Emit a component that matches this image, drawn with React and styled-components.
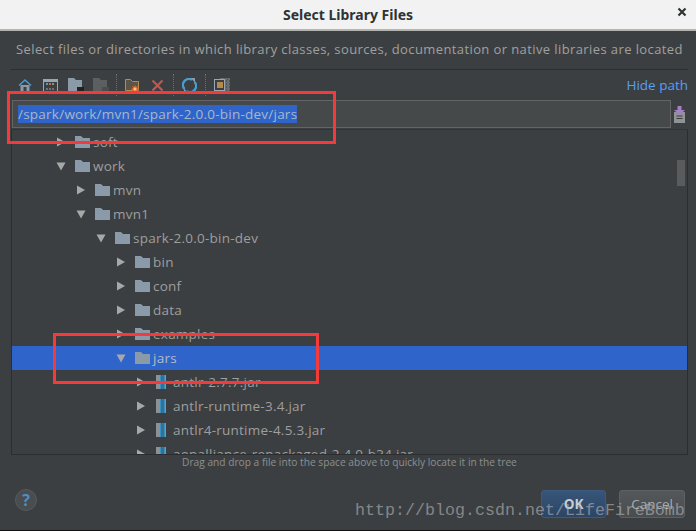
import React from "react";
import styled, { createGlobalStyle } from "styled-components";

const Global = createGlobalStyle`
  html, body { margin: 0; padding: 0; background: #111; }
  body { font-family: "Open Sans", "Noto Sans", sans-serif; }
`;

const Dialog = styled.div`
  position: relative;
  width: 696px;
  height: 530px;
  background: #3c3f41;
  overflow: hidden;
  display: flex;
  flex-direction: column;
`;
const TitleBar = styled.div`
  height: 29px;
  flex: none;
  background: #f2f2f2;
  border-bottom: 2px solid #b4b4b0;
  display: flex;
  align-items: center;
  justify-content: center;
  position: relative;
  font-family: "Noto Sans", sans-serif;
  font-weight: 700;
  font-size: 14px;
  color: #2e3436;
`;
const CloseBtn = styled.svg`
  position: absolute;
  right: 9px;
  top: 7px;
`;
const Description = styled.div`
  height: 36px;
  flex: none;
  margin: 0 8px 0 16px;
  padding-bottom: 2px;
  display: flex;
  align-items: center;
  font-size: 13px;
  letter-spacing: 0.4px;
  white-space: nowrap;
  color: #a0a0a0;
`;
const Separator = styled.div`
  height: 1px;
  flex: none;
  margin: 0 8px 0 11px;
  background: #2b2d2e;
`;
const ToolRow = styled.div`
  height: 30px;
  flex: none;
  margin: 0 8px 0 18px;
  display: flex;
  align-items: center;
`;
const ToolIcon = styled.svg`
  flex: none;
  margin-right: ${p => p.$gap ?? 9}px;
`;
const ToolDivider = styled.div`
  width: 0;
  height: 22px;
  flex: none;
  margin: 0 8px 0 0;
  border-left: 1px dotted #6c6f71;
`;
const HidePath = styled.a`
  margin-left: auto;
  font-size: 13.5px;
  line-height: 18px;
  color: #589df6;
`;
const PathRow = styled.div`
  height: 28px;
  flex: none;
  margin: 0 10px 0 12px;
  display: flex;
  align-items: center;
  gap: 2px;
`;
const PathField = styled.div`
  flex: 1;
  height: 100%;
  box-sizing: border-box;
  background: #45494a;
  border: 1px solid #646464;
  padding-left: 5px;
  display: flex;
  align-items: center;
`;
const PathText = styled.span`
  background: #2f65ca;
  color: #a9b7c6;
  font-size: 13.5px;
  line-height: 18px;
  letter-spacing: 0.24px;
`;
const TreeBox = styled.div`
  position: relative;
  height: 324px;
  flex: none;
  margin: 1px 8px 0 11px;
  border: 1px solid #2b2d2e;
  border-top-color: #323436;
  overflow: hidden;
`;
const Row = styled.div`
  height: 24px;
  display: flex;
  align-items: center;
  padding-left: ${p => 44 + p.$depth * 20}px;
  background: ${p => (p.$selected ? "#2f65ca" : "transparent")};
  color: ${p => (p.$selected ? "#b4bcc6" : "#9e9e9e")};
  font-size: 13.5px;
  letter-spacing: 0.24px;
  white-space: nowrap;
`;
const Arrow = styled.svg`
  flex: none;
  margin-right: 9px;
`;
const NodeIcon = styled.svg`
  flex: none;
  margin-right: 3px;
`;
const Scrollbar = styled.div`
  position: absolute;
  right: 2px;
  top: 30px;
  width: 8px;
  height: 26px;
  background: #595b5d;
`;
const Hint = styled.div`
  height: 14px;
  flex: none;
  padding-left: 182px;
  display: flex;
  align-items: center;
  font-size: 10.2px;
  white-space: nowrap;
  color: #8d8f90;
`;
const Footer = styled.div`
  flex: 1;
  display: flex;
  align-items: flex-start;
  padding: 20px 10px 0 15px;
`;
const HelpBtn = styled.div`
  width: 22px;
  height: 22px;
  border-radius: 50%;
  box-sizing: border-box;
  background: #4a4d50;
  border: 1px solid #555a5e;
  display: flex;
  align-items: center;
  justify-content: center;
  font-weight: 700;
  font-size: 16px;
  line-height: 1;
  color: #4d8fc0;
`;
const DialogBtn = styled.div`
  width: ${p => p.$width}px;
  height: 28px;
  box-sizing: border-box;
  margin: 1px 0 0 ${p => p.$ml ?? 0}px;
  border-radius: 3px;
  border: 1px solid ${p => (p.$primary ? "#3d5a7c" : "#5e6163")};
  background: ${p => (p.$primary ? "linear-gradient(#37557a, #2b4565)" : "linear-gradient(#54585a, #4a4d4f)")};
  color: ${p => (p.$primary ? "#c8ced4" : "#a8abad")};
  font-weight: ${p => (p.$primary ? 700 : 400)};
  font-size: 13.5px;
  display: flex;
  align-items: center;
  justify-content: center;
`;
const RedBox = styled.div`
  position: absolute;
  box-sizing: border-box;
  left: ${p => p.$x}px;
  top: ${p => p.$y}px;
  width: ${p => p.$w}px;
  height: ${p => p.$h}px;
  border: 3px solid #f43a3a;
`;
const Watermark = styled.div`
  position: absolute;
  left: 355px;
  top: 501px;
  font-family: "Liberation Mono", monospace;
  font-size: 16.67px;
  line-height: 20px;
  white-space: nowrap;
  color: rgba(176, 176, 176, 0.65);
`;
const BottomEdge = styled.div`
  height: 1px;
  background: #111;
`;

const rows = [
  { depth: 0, name: "soft", closed: true },
  { depth: 0, name: "work" },
  { depth: 1, name: "mvn", closed: true },
  { depth: 1, name: "mvn1" },
  { depth: 2, name: "spark-2.0.0-bin-dev" },
  { depth: 3, name: "bin", closed: true },
  { depth: 3, name: "conf", closed: true },
  { depth: 3, name: "data", closed: true },
  { depth: 3, name: "examples", closed: true },
  { depth: 3, name: "jars", selected: true },
  { depth: 4, name: "antlr-2.7.7.jar", closed: true, jar: true },
  { depth: 4, name: "antlr-runtime-3.4.jar", closed: true, jar: true },
  { depth: 4, name: "antlr4-runtime-4.5.3.jar", closed: true, jar: true },
  { depth: 4, name: "aopalliance-repackaged-2.4.0-b34.jar", closed: true, jar: true },
];

function TreeArrow({ closed }) {
  return (
    <Arrow width="10" height="10" viewBox="0 0 10 10">
      {closed ? <path d="M1 .5 9 5 1 9.500z" fill="#a8a8a8" /> : <path d="M.5 1.500h9L5 9.500z" fill="#a8a8a8" />}
    </Arrow>
  );
}

function FolderIcon() {
  return (
    <NodeIcon width="15" height="12" viewBox="0 0 15 12">
      <path d="M0 0h6l2 2h7v10H0z" fill="#8a9aa9" />
    </NodeIcon>
  );
}

function JarIcon() {
  return (
    <NodeIcon width="15" height="15" viewBox="0 0 15 15">
      <rect x="1" y="0" width="10" height="14" fill="#8a9197" />
      <rect x="5" y="0" width="5" height="14" fill="#3d8fc0" />
      <path d="M6 1h3M6 3h3M6 5h3M6 7h3M6 9h3M6 11h3M6 13h3" stroke="#26566f" strokeWidth="1" />
    </NodeIcon>
  );
}

export default function App() {
  return (
    <>
      <Global />
      <Dialog>
        <TitleBar>
          Select Library Files
          <CloseBtn width="10" height="10" viewBox="0 0 10 10">
            <path d="M1.500 1.500l7 7M8.500 1.500l-7 7" stroke="#2e3436" strokeWidth="2.200" />
          </CloseBtn>
        </TitleBar>
        <Description>Select files or directories in which library classes, sources, documentation or native libraries are located</Description>
        <Separator />
        <ToolRow>
          <ToolIcon width="14" height="14" viewBox="0 0 14 14" $gap={11}>
            <path d="M2.500 7H11.500V13H8.500V9H5.500V13H2.500z" fill="#8a9aa9" />
            <path d="M7 1 .5 7 1.500 8 7 3l5.500 5 1-1z" fill="#4a9bd0" />
          </ToolIcon>
          <ToolIcon width="15" height="13" viewBox="0 0 15 13" $gap={10}>
            <rect x=".5" y=".5" width="14" height="12" fill="#3c3f41" stroke="#9aa7b0" />
            <rect x="1" y="1" width="13" height="2" fill="#9aa7b0" />
            <rect x="3" y="4" width="2" height="2" fill="#4a9bd0" />
            <rect x="6" y="4" width="2" height="2" fill="#e05a4a" />
            <rect x="9" y="4" width="2" height="2" fill="#6aaa5a" />
            <path d="M3 10h2M6 10h2M9 10h2" stroke="#9aa7b0" />
          </ToolIcon>
          <ToolIcon width="16" height="15" viewBox="0 0 16 15" $gap={9}>
            <path d="M0 0h6l2 2h6v12H0z" fill="#8a9aa9" />
            <rect x="9" y="9" width="7" height="6" fill="#222" />
          </ToolIcon>
          <ToolIcon width="16" height="15" viewBox="0 0 16 15" $gap={7}>
            <path d="M0 0h6l2 2h6v12H0z" fill="#5c5f60" />
            <rect x="9" y="9" width="7" height="6" fill="#4a4c4e" />
          </ToolIcon>
          <ToolDivider />
          <ToolIcon width="15" height="15" viewBox="0 0 15 15" $gap={11}>
            <path d="M.5 1.500h5l2 2h6v9H.5z" fill="#5c5546" stroke="#b58a4a" />
            <path d="M10 7l1 2 2-1-1 2 2 1-2 1 1 2-2-1-1 2-1-2-2 1 1-2-2-1 2-1-1-2 2 1z" fill="#f0603a" />
            <circle cx="10" cy="11" r="1.500" fill="#ffd060" />
          </ToolIcon>
          <ToolIcon width="13" height="13" viewBox="0 0 13 13" $gap={9}>
            <path d="M1.500 1.500l10 10M11.500 1.500l-10 10" stroke="#c75450" strokeWidth="2.200" />
          </ToolIcon>
          <ToolDivider />
          <ToolIcon width="15" height="15" viewBox="0 0 15 15" $gap={8}>
            <path d="M2.500 11A6 6 0 0 1 10 1.800" fill="none" stroke="#4a9bd0" strokeWidth="2.400" />
            <path d="M12.500 4A6 6 0 0 1 5 13.200" fill="none" stroke="#4a9bd0" strokeWidth="2.400" />
            <path d="M8.500 0h4.500v4.500zM6.500 15H2v-4.500z" fill="#8a9aa9" />
          </ToolIcon>
          <ToolDivider />
          <ToolIcon width="16" height="14" viewBox="0 0 16 14" $gap={0}>
            <rect x="6" y="0" width="10" height="14" fill="#6b6d6f" />
            <path d="M10 1h1M13 1h1M12 3h1M15 3h1M12 6h1M15 6h1M12 9h1M15 9h1M12 12h1M15 12h1" stroke="#3c3f41" />
            <rect x=".5" y="1.500" width="10" height="11" fill="#3c3f41" stroke="#9aa7b0" />
            <rect x="3" y="4" width="6" height="6" fill="#b58a4a" />
          </ToolIcon>
          <HidePath>Hide path</HidePath>
        </ToolRow>
        <PathRow>
          <PathField>
            <PathText>/spark/work/mvn1/spark-2.0.0-bin-dev/jars</PathText>
          </PathField>
          <svg width="13" height="17" viewBox="0 0 13 17">
            <rect x="1" y="6" width="11" height="11" fill="#8f9395" />
            <path d="M3.500 10h6M3.500 12.500h6" stroke="#3c3f41" />
            <path d="M4.500 0h4v4H12L6.500 9 1 4h3.500z" fill="#a77fc4" />
          </svg>
        </PathRow>
        <TreeBox>
          {rows.map(r => (
            <Row key={r.name} $depth={r.depth} $selected={r.selected}>
              <TreeArrow closed={r.closed} />
              {r.jar ? <JarIcon /> : <FolderIcon />}
              {r.name}
            </Row>
          ))}
          <Scrollbar />
        </TreeBox>
        <Hint>Drag and drop a file into the space above to quickly locate it in the tree</Hint>
        <Footer>
          <HelpBtn>?</HelpBtn>
          <DialogBtn $primary $width={65} $ml={504}>OK</DialogBtn>
          <DialogBtn $width={66} $ml={13}>Cancel</DialogBtn>
        </Footer>
        <RedBox $x={7} $y={91} $w={329} $h={53} />
        <RedBox $x={53} $y={333} $w={266} $h={51} />
        <Watermark>http://blog.csdn.net/LifeFireBomb</Watermark>
      </Dialog>
      <BottomEdge />
    </>
  );
}
